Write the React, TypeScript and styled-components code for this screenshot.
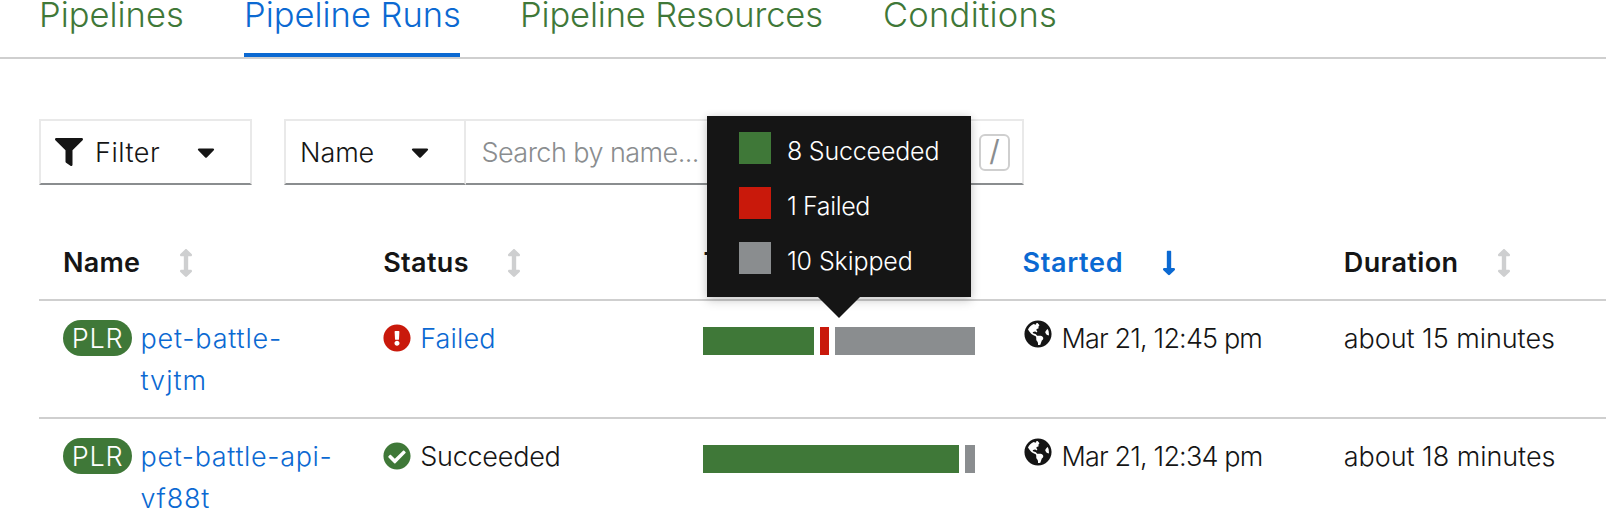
import React from "react";
import styled, { createGlobalStyle } from "styled-components";
import {
  FaArrowsAltV,
  FaCaretDown,
  FaCheckCircle,
  FaExclamationCircle,
  FaFilter,
  FaGlobeAmericas,
  FaLongArrowAltDown,
} from "react-icons/fa";

const color = {
  text: "#151515",
  link: "#0b69d2",
  green: "#3f7838",
  red: "#c9190b",
  grey: "#8a8d8f",
  line: "#cfcfcf",
  faint: "#e9e9e9",
  sort: "#cecfd0",
};

const GlobalStyle = createGlobalStyle`
  * { box-sizing: border-box; }
  body {
    margin: 0;
    overflow: hidden;
    background: #fff;
    color: ${color.text};
    font-family: Inter, "Liberation Sans", sans-serif;
    font-size: 27px;
    font-weight: 330;
  }
  svg { display: block; flex: none; }
`;

const Page = styled.main`
  width: 1606px;
  height: 508px;
  overflow: hidden;
`;

const Text = styled.span<{ $ls?: number }>`
  letter-spacing: ${(p) => p.$ls ?? 0}px;
  white-space: nowrap;
`;

const Tabs = styled.nav`
  display: flex;
  gap: 60px;
  height: 59px;
  padding-left: 39px;
  border-bottom: 2px solid ${color.line};
`;

const Tab = styled.a<{ $active?: boolean; $w: number }>`
  width: ${(p) => p.$w}px;
  height: 57px;
  border-bottom: 4px solid ${(p) => (p.$active ? color.link : "transparent")};
  color: ${(p) => (p.$active ? color.link : color.green)};
  font-size: 34.5px;
  line-height: 30px;
`;

const Toolbar = styled.div`
  display: flex;
  gap: 32px;
  margin: 60px 0 0 39px;
`;

const Control = styled.div<{ $w: number }>`
  display: flex;
  align-items: center;
  width: ${(p) => p.$w}px;
  height: 66px;
  padding: 0 12px 0 14px;
  border: 2px solid ${color.faint};
  border-bottom-color: ${color.grey};
  line-height: 42px;
`;

const SearchGroup = styled.div`
  display: flex;
`;

const SearchBox = styled(Control)`
  border-left: 0;
  justify-content: space-between;
  color: ${color.grey};
`;

const Label = styled.span<{ $w?: number; $gap?: number }>`
  width: ${(p) => (p.$w ? `${p.$w}px` : "auto")};
  margin-left: ${(p) => p.$gap ?? 0}px;
  padding-top: 2px;
`;

const Key = styled.kbd`
  display: flex;
  justify-content: center;
  width: 31px;
  height: 37px;
  border: 2px solid ${color.line};
  border-radius: 6px;
  font: 400 29px/30px Inter, sans-serif;
`;

const Table = styled.section`
  margin: 40px 0 0 39px;
`;

const Row = styled.div<{ $head?: boolean }>`
  display: grid;
  grid-template-columns: repeat(5, 320.2px);
  height: ${(p) => (p.$head ? 76 : 118)}px;
  padding-top: 16px;
  border-bottom: 2px solid ${color.line};
  line-height: ${(p) => (p.$head ? 44 : 42)}px;
`;

const HeadCell = styled.div<{ $sorted?: boolean; $w: number }>`
  display: flex;
  align-items: center;
  padding-left: ${(p) => (p.$sorted ? 23 : 24)}px;
  height: 43px;
  color: ${(p) => (p.$sorted ? color.link : color.text)};
  font-weight: 600;

  & > span { width: ${(p) => p.$w}px; }
  & > svg { color: ${(p) => (p.$sorted ? color.link : color.sort)}; }
`;

const Cell = styled.div`
  display: flex;
  align-items: flex-start;
  padding-left: 24px;
`;

const CellText = styled.div`
  display: flex;
  flex-direction: column;
  padding-top: 1px;
`;

const Badge = styled.span`
  display: flex;
  justify-content: center;
  width: 69px;
  height: 36px;
  margin: 3px 8.5px 0 0;
  border-radius: 18px;
  background: ${color.green};
  color: #fff;
  line-height: 37px;
`;

const NameLink = styled(CellText)`
  color: ${color.link};
`;

const StatusIcon = styled.span<{ $tone: string }>`
  margin: 7px 9px 0 0;
  color: ${(p) => p.$tone};
`;

const StatusLabel = styled(CellText)<{ $link?: boolean }>`
  color: ${(p) => (p.$link ? color.link : color.text)};
`;

const GlobeIcon = styled.span`
  margin: 3px 10px 0 0;
`;

const TaskBar = styled.div`
  position: relative;
  display: flex;
  gap: 6px;
  width: 272px;
  height: 28px;
  margin-top: 10px;
`;

const Segment = styled.div<{ $tone: string; $w: number }>`
  width: ${(p) => p.$w}px;
  background: ${(p) => p.$tone};
`;

const Tooltip = styled.div`
  position: absolute;
  left: 4px;
  bottom: calc(100% + 30px);
  display: flex;
  flex-direction: column;
  gap: 23px;
  width: 264px;
  height: 181px;
  padding: 16px 30px 23px 32px;
  background: ${color.text};
  color: #fff;
  box-shadow: 0 4px 10px rgba(3, 3, 3, 0.16), 0 0 8px rgba(3, 3, 3, 0.1);

  &::after {
    content: "";
    position: absolute;
    top: 100%;
    left: 111px;
    border: 21px solid transparent;
    border-top-color: ${color.text};
    border-bottom: 0;
  }
`;

const LegendItem = styled.div`
  display: flex;
  gap: 15.5px;
  height: 32px;
  font-size: 25px;
  line-height: 38px;
`;

const Swatch = styled.i<{ $tone: string }>`
  flex: none;
  width: 32px;
  height: 32px;
  background: ${(p) => p.$tone};
`;

type Part = { tone: string; w: number };
type Run = {
  name: [string, number][];
  status: string;
  statusLs: number;
  failed?: boolean;
  parts: Part[];
  started: string;
  duration: string;
  legend?: { tone: string; text: string; ls: number }[];
};

const tabs = [
  { text: "Pipelines", w: 145, ls: 0 },
  { text: "Pipeline Runs", w: 216, ls: 0, active: true },
  { text: "Pipeline Resources", w: 303, ls: -0.15 },
  { text: "Conditions", w: 173, ls: 0.25 },
];

const columns = [
  { text: "Name", w: 109, ls: 0.25 },
  { text: "Status", w: 117, ls: 0.35 },
  { text: "Task status", w: 0, ls: 0 },
  { text: "Started", w: 132, ls: 0.65, sorted: true },
  { text: "Duration", w: 146, ls: 0.4 },
];

const runs: Run[] = [
  {
    name: [["pet-battle-", 0.8], ["tvjtm", 1]],
    status: "Failed",
    statusLs: 0.15,
    failed: true,
    parts: [
      { tone: color.green, w: 111 },
      { tone: color.red, w: 9 },
      { tone: color.grey, w: 140 },
    ],
    started: "Mar 21, 12:45 pm",
    duration: "about 15 minutes",
    legend: [
      { tone: color.green, text: "8 Succeeded", ls: -0.18 },
      { tone: color.red, text: "1 Failed", ls: -0.35 },
      { tone: color.grey, text: "10 Skipped", ls: -0.1 },
    ],
  },
  {
    name: [["pet-battle-api-", 0.64], ["vf88t", 0.75]],
    status: "Succeeded",
    statusLs: -0.25,
    parts: [
      { tone: color.green, w: 256 },
      { tone: color.grey, w: 10 },
    ],
    started: "Mar 21, 12:34 pm",
    duration: "about 18 minutes",
  },
];

export default function App() {
  return (
    <Page>
      <GlobalStyle />
      <Tabs>
        {tabs.map((t) => (
          <Tab key={t.text} $active={t.active} $w={t.w}>
            <Text $ls={t.ls}>{t.text}</Text>
          </Tab>
        ))}
      </Tabs>
      <Toolbar>
        <Control $w={213}>
          <FaFilter size={28} />
          <Label $w={97} $gap={12}><Text $ls={0.5}>Filter</Text></Label>
          <FaCaretDown size={28} />
        </Control>
        <SearchGroup>
          <Control $w={182}>
            <Label $w={106}><Text $ls={-0.1}>Name</Text></Label>
            <FaCaretDown size={28} />
          </Control>
          <SearchBox $w={558}>
            <Label $gap={1.5}><Text $ls={-0.55}>Search by name...</Text></Label>
            <Key>/</Key>
          </SearchBox>
        </SearchGroup>
      </Toolbar>
      <Table>
        <Row $head>
          {columns.map((c) => (
            <HeadCell key={c.text} $sorted={c.sorted} $w={c.w}>
              {c.w > 0 ? (
                <>
                  <Text $ls={c.ls}>{c.text}</Text>
                  {c.sorted ? <FaLongArrowAltDown size={28} /> : <FaArrowsAltV size={28} />}
                </>
              ) : (
                <Text>{c.text}</Text>
              )}
            </HeadCell>
          ))}
        </Row>
        {runs.map((r) => (
          <Row key={r.started}>
            <Cell>
              <Badge><Text $ls={0.8}>PLR</Text></Badge>
              <NameLink>
                {r.name.map(([line, ls]) => (
                  <Text key={line} $ls={ls}>{line}</Text>
                ))}
              </NameLink>
            </Cell>
            <Cell>
              <StatusIcon $tone={r.failed ? color.red : color.green}>
                {r.failed ? <FaExclamationCircle size={28} /> : <FaCheckCircle size={28} />}
              </StatusIcon>
              <StatusLabel $link={r.failed}><Text $ls={r.statusLs}>{r.status}</Text></StatusLabel>
            </Cell>
            <Cell>
              <TaskBar>
                {r.parts.map((p) => (
                  <Segment key={p.tone} $tone={p.tone} $w={p.w} />
                ))}
                {r.legend && (
                  <Tooltip role="tooltip">
                    {r.legend.map((l) => (
                      <LegendItem key={l.text}>
                        <Swatch $tone={l.tone} />
                        <Text $ls={l.ls}>{l.text}</Text>
                      </LegendItem>
                    ))}
                  </Tooltip>
                )}
              </TaskBar>
            </Cell>
            <Cell>
              <GlobeIcon><FaGlobeAmericas size={28} /></GlobeIcon>
              <CellText><Text $ls={-0.85}>{r.started}</Text></CellText>
            </Cell>
            <Cell><CellText><Text $ls={-0.05}>{r.duration}</Text></CellText></Cell>
          </Row>
        ))}
      </Table>
    </Page>
  );
}
